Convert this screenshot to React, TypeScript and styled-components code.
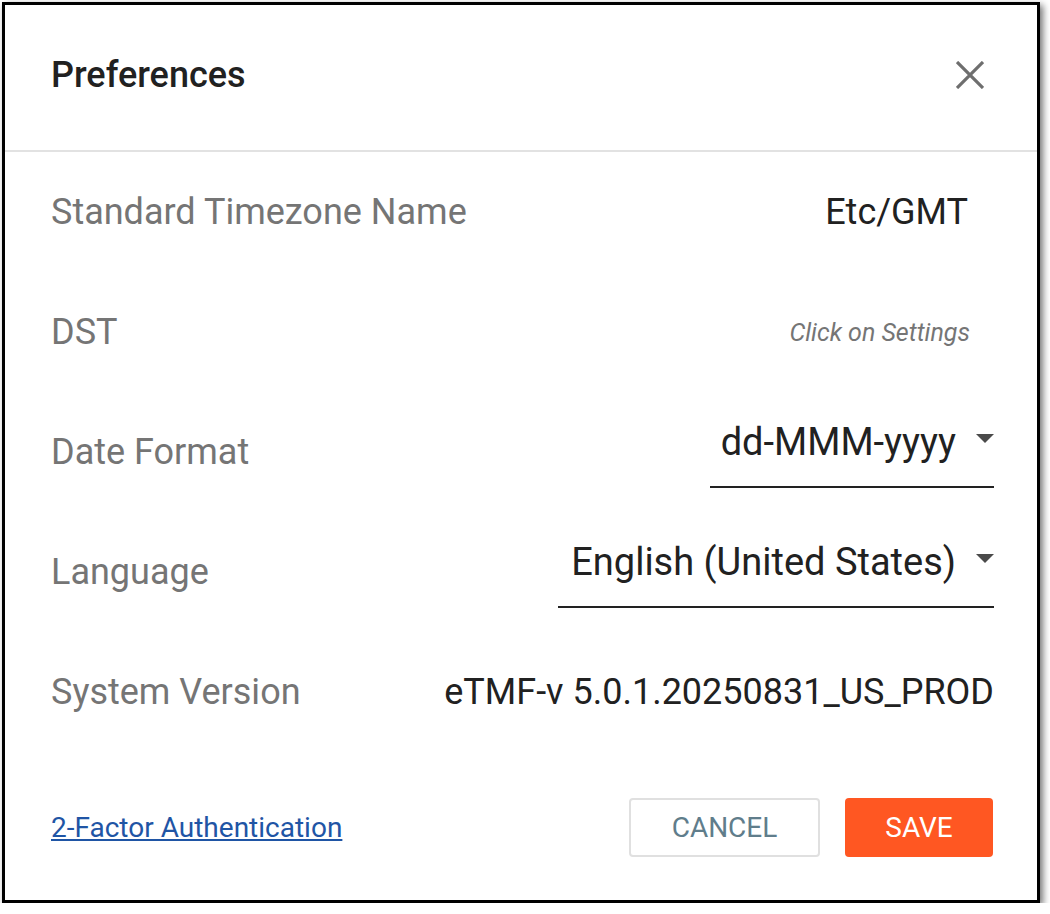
import React from 'react'
import styled, { createGlobalStyle } from 'styled-components'

const GlobalStyle = createGlobalStyle`
  body {
    margin: 0;
    background: #ffffff;
    font-family: Roboto, 'Liberation Sans', Arial, sans-serif;
  }
`

const Dialog = styled.div`
  box-sizing: border-box;
  margin: 2px 0 0 2px;
  width: 1038px;
  height: 901px;
  border: 3px solid #000;
  background: #fff;
  box-shadow: 3px 3px 7px rgba(0, 0, 0, 0.55);
  display: flex;
  flex-direction: column;
`

const Header = styled.div`
  height: 147px;
  flex-shrink: 0;
  box-sizing: border-box;
  padding: 0 52px 6px 46px;
  border-bottom: 2px solid #e2e2e2;
  display: flex;
  align-items: center;
  justify-content: space-between;
`

const Title = styled.h1`
  margin: 0;
  font-size: 36px;
  font-weight: 500;
  color: #212121;
`

const CloseButton = styled.button`
  border: none;
  background: none;
  padding: 0;
  width: 30px;
  height: 30px;
  display: flex;
  align-items: center;
  justify-content: center;
  cursor: pointer;
`

const Body = styled.div`
  display: flex;
  flex-direction: column;
  padding: 0 43px 0 46px;
`

const Row = styled.div`
  height: 120px;
  display: flex;
  align-items: center;
  justify-content: space-between;
`

const Label = styled.span`
  font-size: 36px;
  color: #757575;
`

const Value = styled.span<{ $inset?: number }>`
  font-size: 36px;
  color: #212121;
  margin-right: ${(p) => p.$inset || 0}px;
`

const Hint = styled.span`
  font-size: 25px;
  font-style: italic;
  color: #757575;
  margin-right: 24px;
`

const Select = styled.div<{ $width: number }>`
  box-sizing: border-box;
  width: ${(p) => p.$width}px;
  height: 72px;
  padding-bottom: 18px;
  border-bottom: 2px solid #222;
  display: flex;
  align-items: center;
  justify-content: flex-end;
  gap: 20px;
  font-size: 38px;
  color: #212121;
  cursor: pointer;
`

const Caret = styled.span`
  width: 0;
  height: 0;
  border-left: 9px solid transparent;
  border-right: 9px solid transparent;
  border-top: 9px solid #4a4a4a;
  margin-top: -8px;
`

const Footer = styled.div`
  flex: 1;
  display: flex;
  align-items: center;
  justify-content: space-between;
  padding: 3px 44px 0 46px;
`

const Link = styled.a`
  font-size: 28px;
  color: #1f55a5;
  text-decoration: underline;
  cursor: pointer;
`

const Actions = styled.div`
  display: flex;
  gap: 25px;
`

const Button = styled.button<{ $primary?: boolean }>`
  box-sizing: border-box;
  height: 59px;
  width: ${(p) => (p.$primary ? 148 : 191)}px;
  border-radius: 4px;
  font-family: inherit;
  font-size: 28px;
  text-transform: uppercase;
  cursor: pointer;
  border: ${(p) => (p.$primary ? 'none' : '2px solid #e0e0e0')};
  background: ${(p) => (p.$primary ? '#ff5722' : '#ffffff')};
  color: ${(p) => (p.$primary ? '#ffffff' : '#607d8b')};
`

const CloseIcon = () => (
  <svg width="28" height="28" viewBox="0 0 28 28">
    <path d="M1 1 L27 27 M27 1 L1 27" stroke="#6e6e6e" strokeWidth="3.2" />
  </svg>
)

export default function App() {
  return (
    <>
      <GlobalStyle />
      <Dialog>
        <Header>
          <Title>Preferences</Title>
          <CloseButton aria-label="Close">
            <CloseIcon />
          </CloseButton>
        </Header>
        <Body>
          <Row>
            <Label>Standard Timezone Name</Label>
            <Value $inset={26}>Etc/GMT</Value>
          </Row>
          <Row>
            <Label>DST</Label>
            <Hint>Click on Settings</Hint>
          </Row>
          <Row>
            <Label>Date Format</Label>
            <Select $width={284}>
              dd-MMM-yyyy
              <Caret />
            </Select>
          </Row>
          <Row>
            <Label>Language</Label>
            <Select $width={436}>
              English (United States)
              <Caret />
            </Select>
          </Row>
          <Row>
            <Label>System Version</Label>
            <Value>eTMF-v 5.0.1.20250831_US_PROD</Value>
          </Row>
        </Body>
        <Footer>
          <Link>2-Factor Authentication</Link>
          <Actions>
            <Button>Cancel</Button>
            <Button $primary>Save</Button>
          </Actions>
        </Footer>
      </Dialog>
    </>
  )
}
